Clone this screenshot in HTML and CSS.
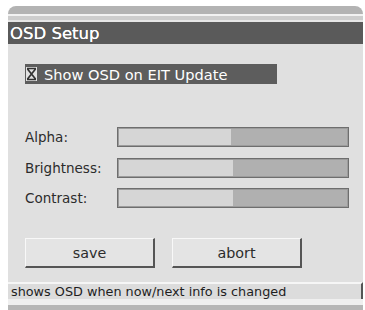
FILE: index.html
```html
<!DOCTYPE html>
<html>
<head>
<meta charset="utf-8">
<link rel="stylesheet" href="styles.css">
</head>
<body>
<div class="window">
  <div class="topband"></div>
  <div class="sep"></div>
  <div class="title">OSD Setup</div>
  <div class="content">
    <div class="check-row">
      <svg class="checkbox" width="11" height="14" viewBox="0 0 11 14">
        <rect x="0" y="0" width="11" height="14" fill="#e2e2e2"/>
        <path d="M1 1.5 H10 M1 12.5 H10 M1.5 2 L9.5 12 M9.5 2 L1.5 12" stroke="#333333" stroke-width="1.7" fill="none"/>
      </svg>
      <span class="check-label">Show OSD on EIT Update</span>
    </div>
    <div class="sliders">
      <div class="label">Alpha:</div>
      <div class="bar"><div class="fill" style="width:49%"></div></div>
      <div class="label">Brightness:</div>
      <div class="bar"><div class="fill" style="width:50%"></div></div>
      <div class="label">Contrast:</div>
      <div class="bar"><div class="fill" style="width:50%"></div></div>
    </div>
    <div class="buttons">
      <div class="btn">save</div>
      <div class="btn">abort</div>
    </div>
  </div>
  <div class="status">shows OSD when now/next info is changed</div>
  <div class="bottom-gap"></div>
  <div class="bottom-band"></div>
</div>
</body>
</html>
```
FILE: styles.css
```css
html, body {
  margin: 0;
  padding: 0;
  background: #ffffff;
}
body {
  font-family: "DejaVu Sans", "Liberation Sans", sans-serif;
}
.window {
  margin: 6px 0 0 8px;
  width: 355px;
}
.topband {
  height: 8px;
  background: #b3b3b3;
  border-radius: 9px 9px 0 0;
}
.sep {
  height: 8px;
  background: linear-gradient(#f2f2f2 0 2px, #cdcdcd 2px 6px, #e6e6e6 6px 8px);
}
.title {
  height: 22px;
  line-height: 23px;
  background: #5a5a5a;
  color: #ffffff;
  font-size: 16.5px;
  padding-left: 2px;
  text-shadow: 0 0 0.4px #ffffff;
}
.content {
  background: #e0e0e0;
  height: 238px;
  box-sizing: border-box;
  padding: 20px 0 0 17px;
}
.check-row {
  width: 252px;
  height: 20px;
  background: #5d5d5d;
  display: flex;
  align-items: center;
  color: #ffffff;
  font-size: 14.6px;
}
.checkbox {
  margin-left: 1px;
  display: block;
}
.check-label {
  margin-left: 7px;
}
.sliders {
  margin-top: 43px;
  display: grid;
  grid-template-columns: 92px 232px;
  grid-auto-rows: 20px;
  row-gap: 10.5px;
  align-items: center;
}
.label {
  font-size: 13.5px;
  color: #2c2c2c;
}
.bar {
  height: 20px;
  box-sizing: border-box;
  border: 1px solid #6e6e6e;
  box-shadow: inset 0 0 0 1px #9c9c9c;
  background: #b0b0b0;
  padding: 1px;
}
.fill {
  height: 100%;
  background: #d6d6d6;
}
.buttons {
  margin-top: 30px;
  display: flex;
  gap: 17px;
}
.btn {
  width: 130px;
  height: 30px;
  box-sizing: border-box;
  background: #e4e4e4;
  border-top: 1px solid #f8f8f8;
  border-left: 1px solid #f8f8f8;
  border-bottom: 2px solid #555555;
  border-right: 2px solid #555555;
  display: flex;
  align-items: center;
  justify-content: center;
  font-size: 14.3px;
  color: #2c2c2c;
}
.status {
  height: 17px;
  box-sizing: border-box;
  background: #dcdcdc;
  border-top: 2px solid #f6f6f6;
  border-right: 2px solid #555555;
  font-size: 12.8px;
  line-height: 15px;
  color: #1e1e1e;
  padding-left: 3px;
  white-space: nowrap;
}
.bottom-gap {
  height: 6px;
  background: #efefef;
}
.bottom-band {
  height: 5px;
  background: #b6b6b6;
}
```
